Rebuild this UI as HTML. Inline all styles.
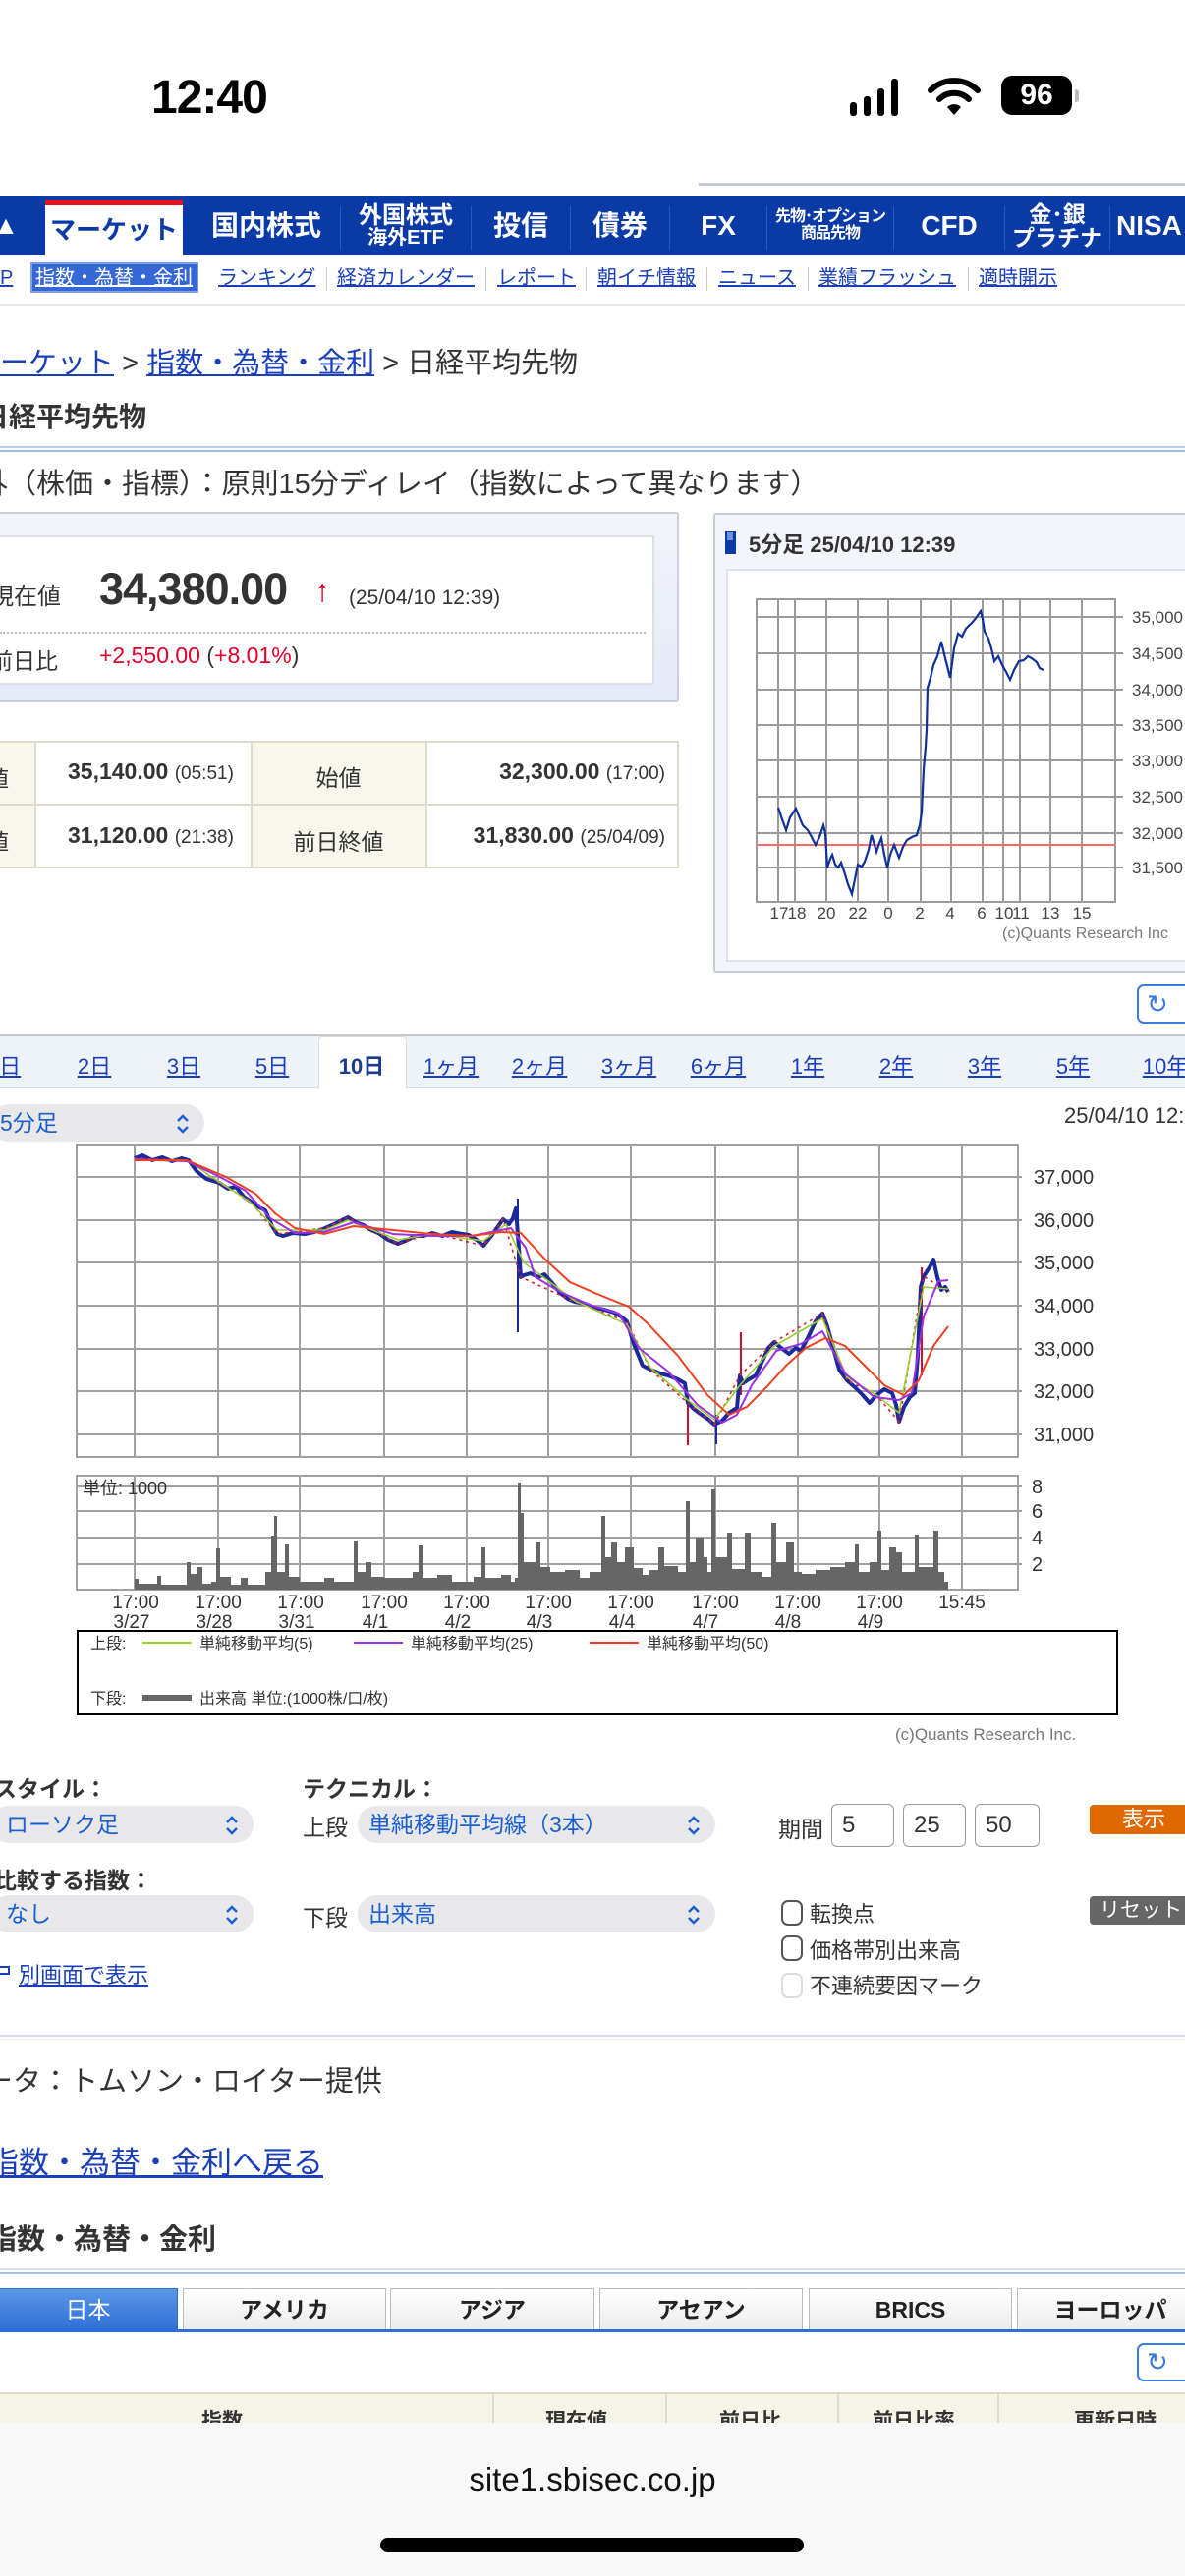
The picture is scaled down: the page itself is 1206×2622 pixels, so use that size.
<!DOCTYPE html>
<html><head><meta charset="utf-8">
<style>
*{margin:0;padding:0;box-sizing:border-box}
body{width:1206px;height:2622px;position:relative;overflow:hidden;background:#fff;font-family:"Liberation Sans","Noto Sans CJK JP",sans-serif;color:#333}
.a{position:absolute;white-space:nowrap}
.nav{position:absolute;left:0;top:200px;width:1206px;height:60px;background:#0a3aa6}
.nt{position:absolute;top:0;height:60px;color:#fff;font-weight:bold;text-align:center;display:flex;align-items:center;justify-content:center;line-height:1.05;white-space:nowrap}
.sep{position:absolute;top:10px;width:1px;height:44px;background:#2a58bd}
.sub{position:absolute;top:270px;font-size:20px;color:#1a3fb8;text-decoration:underline;line-height:26px;white-space:nowrap}
.ssep{position:absolute;top:272px;width:1px;height:24px;background:#ccc}
.pt{position:absolute;top:1068px;font-size:22px;color:#1a3fb8;text-decoration:underline;transform:translateX(-50%);white-space:nowrap}
.sel{position:absolute;height:38px;border-radius:19px;background:#e8e8ea;color:#1a5fd0;font-size:23px;line-height:38px;padding-left:8px;white-space:nowrap}
.sel svg{position:absolute;right:14px;top:9px}
.inp{position:absolute;top:1836px;height:44px;border:1.5px solid #999;border-radius:6px;font-size:24px;line-height:42px;padding-left:10px;background:#fff}
.cb{position:absolute;width:22px;height:26px;border:2px solid #555;border-radius:7px;background:#fff}
.tab{position:absolute;top:2329px;height:42px;border:1px solid #bbb;border-bottom:none;background:linear-gradient(#fff,#ececec);font-weight:bold;font-size:23px;text-align:center;line-height:42px;color:#222;white-space:nowrap}
</style></head><body>

<!-- status bar -->
<div class="a" style="left:154px;top:72px;font-size:48px;font-weight:bold;color:#000;letter-spacing:-1px">12:40</div>
<svg class="a" style="left:862px;top:76px" width="64" height="44">
<rect x="3" y="28" width="7" height="14" rx="3" fill="#000"/><rect x="17" y="22" width="7" height="20" rx="3" fill="#000"/><rect x="31" y="14" width="7" height="28" rx="3" fill="#000"/><rect x="45" y="4" width="7" height="38" rx="3" fill="#000"/></svg>
<svg class="a" style="left:944px;top:78px" width="54" height="40" viewBox="0 0 54 40">
<path d="M3 14 A34 34 0 0 1 51 14" fill="none" stroke="#000" stroke-width="6" stroke-linecap="round"/>
<path d="M12 23 A21 21 0 0 1 42 23" fill="none" stroke="#000" stroke-width="6" stroke-linecap="round"/>
<path d="M20 31 L27 39 L34 31 A10 10 0 0 0 20 31Z" fill="#000"/></svg>
<div class="a" style="left:1019px;top:77px;width:72px;height:40px;background:#000;border-radius:11px;color:#fff;font-weight:bold;font-size:30px;text-align:center;line-height:40px">96</div>
<div class="a" style="left:1094px;top:91px;width:4px;height:13px;background:#bbb;border-radius:0 3px 3px 0"></div>
<div class="a" style="left:711px;top:186px;width:495px;height:3px;background:#c5cbd6"></div>

<!-- nav -->
<div class="nav">
 <div class="nt" style="left:0;width:12px;font-size:26px">&#9650;</div>
 <div class="nt" style="left:46px;width:140px;top:4px;height:56px;background:#fff;color:#0a3aa6;font-size:26px;border-top:5px solid #e8101e">マーケット</div>
 <div class="nt" style="left:196px;width:150px;font-size:28px">国内株式</div>
 <div class="sep" style="left:346px"></div>
 <div class="nt" style="left:347px;width:132px;font-size:24px;flex-direction:column">外国株式<span style="font-size:20px">海外ETF</span></div>
 <div class="sep" style="left:479px"></div>
 <div class="nt" style="left:480px;width:100px;font-size:28px">投信</div>
 <div class="sep" style="left:580px"></div>
 <div class="nt" style="left:581px;width:100px;font-size:28px">債券</div>
 <div class="sep" style="left:681px"></div>
 <div class="nt" style="left:682px;width:98px;font-size:28px">FX</div>
 <div class="sep" style="left:780px"></div>
 <div class="nt" style="left:781px;width:128px;font-size:16px;flex-direction:column;letter-spacing:-1px"><span>先物･オプション</span><span>商品先物</span></div>
 <div class="sep" style="left:909px"></div>
 <div class="nt" style="left:910px;width:112px;font-size:28px">CFD</div>
 <div class="sep" style="left:1022px"></div>
 <div class="nt" style="left:1023px;width:106px;font-size:23px;flex-direction:column">金･銀<span>プラチナ</span></div>
 <div class="sep" style="left:1129px"></div>
 <div class="nt" style="left:1136px;width:90px;font-size:28px;justify-content:flex-start">NISA</div>
</div>

<!-- sub nav -->
<div class="sub" style="left:0">P</div>
<div class="a" style="left:31px;top:267px;width:171px;height:31px;background:#3568d4;border:2px solid #7ea0e6"></div>
<div class="sub" style="left:36px;color:#fff">指数・為替・金利</div>
<div class="sub" style="left:222px">ランキング</div><div class="ssep" style="left:332px"></div>
<div class="sub" style="left:343px">経済カレンダー</div><div class="ssep" style="left:494px"></div>
<div class="sub" style="left:506px">レポート</div><div class="ssep" style="left:596px"></div>
<div class="sub" style="left:608px">朝イチ情報</div><div class="ssep" style="left:719px"></div>
<div class="sub" style="left:731px">ニュース</div><div class="ssep" style="left:822px"></div>
<div class="sub" style="left:833px">業績フラッシュ</div><div class="ssep" style="left:985px"></div>
<div class="sub" style="left:996px">適時開示</div>
<div class="a" style="left:0;top:309px;width:1206px;height:2px;background:#e6e6e6"></div>

<!-- breadcrumb -->
<div class="a" style="left:-29px;top:346px;font-size:29px;color:#333"><span style="color:#1a3fb8;text-decoration:underline">マーケット</span> &gt; <span style="color:#1a3fb8;text-decoration:underline">指数・為替・金利</span> &gt; 日経平均先物</div>
<div class="a" style="left:-19px;top:403px;font-size:28px;font-weight:bold;color:#333">日経平均先物</div>
<div class="a" style="left:0;top:454px;width:1206px;height:2px;background:#bcd0ea"></div>
<div class="a" style="left:0;top:458px;width:1206px;height:2px;background:#9fbbe2"></div>
<div class="a" style="left:-21px;top:469px;font-size:29px;color:#333">外（株価・指標）：原則15分ディレイ（指数によって異なります）</div>

<!-- price box -->
<div class="a" style="left:-4px;top:521px;width:695px;height:194px;background:linear-gradient(#f3f5fb,#e3e9f6);border:2px solid #ccd;border-radius:3px"></div>
<div class="a" style="left:-4px;top:545px;width:670px;height:152px;background:#fff;border:2px solid #dcdfe6"></div>
<div class="a" style="left:-10px;top:587px;font-size:24px;color:#333">現在値</div>
<div class="a" style="left:101px;top:574px;font-size:45px;font-weight:bold;color:#333;letter-spacing:-1px">34,380.00</div>
<div class="a" style="left:320px;top:583px;font-size:32px;color:#e0002a">↑</div>
<div class="a" style="left:355px;top:597px;font-size:21px;color:#333">(25/04/10 12:39)</div>
<div class="a" style="left:0;top:643px;width:657px;border-top:2px dotted #bbb"></div>
<div class="a" style="left:-10px;top:654px;font-size:23px;color:#333">前日比</div>
<div class="a" style="left:101px;top:654px;font-size:23px;color:#e0002a">+2,550.00 <span style="color:#333">(</span>+8.01%<span style="color:#333">)</span></div>

<!-- table -->
<div class="a" style="left:-2px;top:754px;width:693px;height:130px;border:2px solid #dedbcc;background:#fff"></div>
<div class="a" style="left:0;top:756px;width:35px;height:126px;background:#f8f7ee"></div>
<div class="a" style="left:256px;top:756px;width:177px;height:126px;background:#f8f7ee"></div>
<div class="a" style="left:35px;top:754px;width:2px;height:130px;background:#dedbcc"></div>
<div class="a" style="left:255px;top:754px;width:2px;height:130px;background:#dedbcc"></div>
<div class="a" style="left:433px;top:754px;width:2px;height:130px;background:#dedbcc"></div>
<div class="a" style="left:0;top:818px;width:691px;height:2px;background:#dedbcc"></div>
<div class="a" style="left:-14px;top:774px;font-size:23px">値</div>
<div class="a" style="left:-14px;top:838px;font-size:23px">値</div>
<div class="a" style="left:69px;top:772px;font-size:23px;font-weight:bold">35,140.00 <span style="font-weight:normal;font-size:19px">(05:51)</span></div>
<div class="a" style="left:69px;top:837px;font-size:23px;font-weight:bold">31,120.00 <span style="font-weight:normal;font-size:19px">(21:38)</span></div>
<div class="a" style="left:256px;width:177px;top:773px;font-size:23px;text-align:center">始値</div>
<div class="a" style="left:256px;width:177px;top:838px;font-size:23px;text-align:center">前日終値</div>
<div class="a" style="right:529px;top:772px;font-size:23px;font-weight:bold">32,300.00 <span style="font-weight:normal;font-size:19px">(17:00)</span></div>
<div class="a" style="right:529px;top:837px;font-size:23px;font-weight:bold">31,830.00 <span style="font-weight:normal;font-size:19px">(25/04/09)</span></div>

<!-- mini chart panel -->
<div class="a" style="left:726px;top:522px;width:490px;height:468px;background:#f3f5fb;border:2px solid #c8ccd4;border-radius:3px"></div>
<div class="a" style="left:738px;top:540px;width:11px;height:24px;background:#0a3aa6"></div>
<div class="a" style="left:740px;top:541px;width:6px;height:9px;background:#6f8fd8"></div>
<div class="a" style="left:762px;top:537px;font-size:22px;font-weight:bold;color:#333">5分足 25/04/10 12:39</div>
<div class="a" style="left:739px;top:579px;width:480px;height:400px;background:#fff;border:2px solid #dde3ee"></div>
<svg class="a" style="left:0;top:0" width="1206" height="1000">
<g stroke="#9a9a9a" stroke-width="2" fill="none">
<rect x="770" y="610" width="365" height="308"/>
<path d="M770 628H1143M770 665H1143M770 702H1143M770 738H1143M770 774H1143M770 811H1143M770 848H1143M770 883H1143"/>
<path d="M792 610V918M809 610V918M841 610V918M873 610V918M904 610V918M937 610V918M968 610V918M1000 610V918M1021 610V918M1038 610V918M1069 610V918M1101 610V918"/>
</g>
<line x1="770" y1="860" x2="1135" y2="860" stroke="#ff6b6b" stroke-width="2"/>
<polyline fill="none" stroke="#0f2f9a" stroke-width="2.2" points="792,822 796,834 800,845 804,832 810,823 814,833 817,840 822,845 826,852 830,860 834,852 838,840 840,848 842,883 845,874 847,870 850,880 853,883 856,878 860,890 863,900 867,910 870,895 873,880 877,882 880,877 884,865 887,850 890,860 892,867 895,858 897,853 900,870 903,883 906,870 910,860 913,868 915,873 919,862 923,855 928,852 933,850 936,840 938,827 940,783 942,760 943,743 944,700 947,690 950,677 954,668 958,653 962,670 967,690 971,660 975,645 979,648 983,640 987,636 990,633 994,628 998,622 1000,630 1002,643 1006,650 1009,660 1012,673 1016,668 1020,677 1024,684 1028,692 1032,682 1037,673 1042,672 1046,668 1050,670 1055,674 1058,680 1062,682"/>
<g font-size="17" fill="#444" font-family="Liberation Sans,sans-serif">
<text x="1152" y="634">35,000</text><text x="1152" y="671">34,500</text><text x="1152" y="708">34,000</text><text x="1152" y="744">33,500</text><text x="1152" y="780">33,000</text><text x="1152" y="817">32,500</text><text x="1152" y="854">32,000</text><text x="1152" y="889">31,500</text>
<text y="935" text-anchor="middle"><tspan x="793">17</tspan><tspan x="811">18</tspan><tspan x="841">20</tspan><tspan x="873">22</tspan><tspan x="904">0</tspan><tspan x="936">2</tspan><tspan x="967">4</tspan><tspan x="999">6</tspan><tspan x="1022">10</tspan><tspan x="1039">11</tspan><tspan x="1069">13</tspan><tspan x="1101">15</tspan></text>
<text x="1020" y="955" fill="#777" font-size="16">(c)Quants Research Inc</text>
</g>
</svg>
<div class="a" style="left:1157px;top:1002px;width:60px;height:40px;border:2px solid #3b7be0;border-radius:7px;background:#fff;color:#3b7be0;font-size:26px;line-height:36px;padding-left:8px">↻</div>

<!-- period tabs -->
<div class="a" style="left:0;top:1052px;width:1206px;height:55px;background:#eef2f9;border-top:2px solid #c9c9c9;border-bottom:1px solid #dde"></div>
<div class="a" style="left:324px;top:1055px;width:90px;height:53px;background:#fff;border:1px solid #ddd;border-bottom:none;border-radius:4px 4px 0 0"></div>
<div class="pt" style="left:4px">1日</div><div class="pt" style="left:96px">2日</div><div class="pt" style="left:187px">3日</div><div class="pt" style="left:277px">5日</div>
<div class="pt" style="left:368px;color:#1a3a90;text-decoration:none;font-weight:bold">10日</div>
<div class="pt" style="left:459px">1ヶ月</div><div class="pt" style="left:549px">2ヶ月</div><div class="pt" style="left:640px">3ヶ月</div><div class="pt" style="left:731px">6ヶ月</div>
<div class="pt" style="left:822px">1年</div><div class="pt" style="left:912px">2年</div><div class="pt" style="left:1002px">3年</div><div class="pt" style="left:1092px">5年</div><div class="pt" style="left:1186px">10年</div>

<div class="sel" style="left:-10px;top:1124px;width:218px;padding-left:10px">5分足<svg width="16" height="22" viewBox="0 0 16 22"><path d="M3 8L8 3L13 8M3 14L8 19L13 14" stroke="#1a5fd0" stroke-width="2.5" fill="none"/></svg></div>
<div class="a" style="left:1083px;top:1123px;font-size:22px;color:#333">25/04/10 12:39</div>

<!-- main chart -->
<svg class="a" style="left:0;top:1150px" width="1206" height="630" viewBox="0 1150 1206 630">
<g stroke="#a0a0a0" stroke-width="2" fill="none">
<rect x="78" y="1165" width="958" height="318"/>
<path d="M78 1198H1040M78 1242H1040M78 1285H1040M78 1329H1040M78 1373H1040M78 1416H1040M78 1460H1040"/>
<path d="M137 1165V1483M222 1165V1483M305 1165V1483M391 1165V1483M475 1165V1483M558 1165V1483M642 1165V1483M728 1165V1483M812 1165V1483M895 1165V1483M979 1165V1483"/>
<rect x="78" y="1502" width="958" height="116"/>
<path d="M78 1513H1040M78 1538H1040M78 1565H1040M78 1592H1040"/>
<path d="M137 1502V1618M222 1502V1618M305 1502V1618M391 1502V1618M475 1502V1618M558 1502V1618M642 1502V1618M728 1502V1618M812 1502V1618M895 1502V1618M979 1502V1618"/>
</g>
<g stroke-width="2">
<line x1="527" y1="1220" x2="527" y2="1356" stroke="#1a2a9a"/>
<line x1="700" y1="1420" x2="700" y2="1471" stroke="#d01030"/>
<line x1="729" y1="1440" x2="729" y2="1470" stroke="#1a2a9a"/>
<line x1="754" y1="1356" x2="754" y2="1420" stroke="#d01030"/>
<line x1="938" y1="1290" x2="938" y2="1400" stroke="#d01030"/>
</g>
<polyline fill="none" stroke="#1a2a9a" stroke-width="4" stroke-linejoin="round" points="137,1179 145,1176 155,1181 165,1178 175,1182 185,1179 192,1181 200,1192 210,1200 223,1204 232,1210 240,1208 248,1218 254,1222 262,1228 270,1232 277,1248 282,1256 288,1258 298,1255 310,1256 320,1254 331,1250 340,1246 348,1242 354,1239 362,1244 370,1247 378,1252 385,1255 395,1262 405,1266 415,1262 422,1258 431,1258 440,1255 450,1258 460,1254 470,1256 477,1257 485,1262 492,1268 500,1258 507,1248 512,1241 518,1246 522,1240 525,1230 528,1270 530,1300 533,1298 540,1296 548,1300 554,1297 562,1306 570,1316 578,1322 585,1325 595,1327 605,1331 615,1333 625,1336 632,1340 638,1345 645,1368 654,1390 662,1394 672,1398 680,1400 690,1404 697,1408 700,1428 706,1434 714,1440 720,1444 727,1450 735,1446 742,1438 750,1433 753,1400 756,1408 762,1404 769,1400 776,1385 782,1372 788,1366 795,1372 803,1378 810,1372 815,1375 822,1362 830,1345 837,1337 842,1350 848,1372 854,1394 862,1405 870,1412 878,1420 885,1428 892,1420 900,1414 908,1418 912,1430 915,1447 920,1432 926,1422 931,1418 934,1380 937,1310 940,1299 946,1290 950,1282 954,1300 958,1313 962,1310 965,1315"/>
<polyline fill="none" stroke="#d8203a" stroke-width="1.6" stroke-dasharray="3 4" points="137,1179 192,1181 223,1204 254,1222 282,1256 331,1250 354,1239 405,1266 440,1255 492,1268 512,1241 530,1300 585,1325 638,1345 662,1394 700,1428 727,1450 753,1400 788,1366 837,1337 862,1405 892,1420 915,1447 940,1299 965,1315"/>
<polyline fill="none" stroke="#9acd32" stroke-width="1.6" points="137,1181 192,1182 223,1203 254,1223 282,1252 331,1252 354,1242 405,1262 440,1256 492,1263 515,1246 533,1285 585,1324 638,1348 662,1392 700,1425 727,1445 753,1410 788,1370 837,1342 862,1402 892,1420 915,1438 940,1310 965,1312"/>
<polyline fill="none" stroke="#9a30e8" stroke-width="2" points="137,1180 190,1182 220,1196 250,1212 275,1240 300,1255 330,1254 360,1244 400,1256 440,1258 480,1258 520,1250 535,1270 545,1300 570,1315 600,1328 630,1337 650,1372 680,1396 710,1430 735,1448 750,1440 765,1410 790,1375 815,1368 837,1355 860,1398 890,1422 915,1425 928,1418 940,1340 955,1304 965,1303"/>
<polyline fill="none" stroke="#f04020" stroke-width="2" points="137,1181 190,1181 230,1198 260,1215 280,1235 300,1250 330,1256 360,1248 400,1252 440,1256 480,1258 510,1254 530,1255 555,1282 580,1305 610,1318 640,1330 660,1348 690,1380 720,1420 742,1440 760,1432 780,1412 800,1390 820,1372 840,1362 860,1370 880,1390 900,1410 920,1420 935,1405 950,1370 965,1350"/>
<path fill="#666" d="M137 1618V1607H141V1612H160V1604H164V1613H190V1590H194V1602H200V1595H206V1612H215V1610H220V1576H224V1605H235V1613H245V1606H252V1613H270V1600H276V1563H279V1543H282V1600H290V1572H294V1605H305V1610H330V1606H340V1610H360V1569H364V1600H372V1590H378V1605H391V1606H420V1600H426V1573H430V1606H445V1603H460V1610H470V1610H482V1605H490V1575H494V1606H510V1603H520V1610H524V1606H527V1509H530V1540H533V1590H545V1570H550V1595H560V1600H575V1598H590V1606H600V1600H612V1543H616V1585H622V1570H628V1590H636V1575H645V1596H654V1603H660V1598H670V1575H676V1594H690V1600H698V1528H702V1590H708V1565H716V1585H720V1600H724V1516H728V1585H740V1560H745V1597H758V1560H764V1600H775V1605H785V1550H790V1590H800V1570H808V1600H816V1602H830V1598H845V1595H860V1590H870V1572H874V1600H885V1590H893V1558H897V1598H905V1575H912V1580H918V1600H931V1562H935V1595H950V1558H955V1600H961V1610H965V1618Z"/>
<g font-family="Liberation Sans,sans-serif" fill="#333">
<g font-size="20"><text x="1052" y="1205">37,000</text><text x="1052" y="1249">36,000</text><text x="1052" y="1292">35,000</text><text x="1052" y="1336">34,000</text><text x="1052" y="1380">33,000</text><text x="1052" y="1423">32,000</text><text x="1052" y="1467">31,000</text>
<text x="1050" y="1520">8</text><text x="1050" y="1545">6</text><text x="1050" y="1572">4</text><text x="1050" y="1599">2</text></g>
<text x="84" y="1521" font-size="18">単位: 1000</text>
<g font-size="19" text-anchor="middle">
<text x="138" y="1637">17:00</text><text x="222" y="1637">17:00</text><text x="306" y="1637">17:00</text><text x="391" y="1637">17:00</text><text x="475" y="1637">17:00</text><text x="558" y="1637">17:00</text><text x="642" y="1637">17:00</text><text x="728" y="1637">17:00</text><text x="812" y="1637">17:00</text><text x="895" y="1637">17:00</text><text x="979" y="1637">15:45</text>
<text x="134" y="1657">3/27</text><text x="218" y="1657">3/28</text><text x="302" y="1657">3/31</text><text x="382" y="1657">4/1</text><text x="466" y="1657">4/2</text><text x="549" y="1657">4/3</text><text x="633" y="1657">4/4</text><text x="718" y="1657">4/7</text><text x="802" y="1657">4/8</text><text x="886" y="1657">4/9</text></g>
</g>
<rect x="79" y="1660" width="1058" height="85" fill="none" stroke="#000" stroke-width="2"/>
<g font-family="Liberation Sans,Noto Sans CJK JP,sans-serif" font-size="16" fill="#333">
<text x="92" y="1678">上段:</text><line x1="145" y1="1672" x2="195" y2="1672" stroke="#9acd32" stroke-width="2"/><text x="203" y="1678">単純移動平均(5)</text>
<line x1="360" y1="1672" x2="410" y2="1672" stroke="#9a30e8" stroke-width="2"/><text x="418" y="1678">単純移動平均(25)</text>
<line x1="600" y1="1672" x2="650" y2="1672" stroke="#f04020" stroke-width="2"/><text x="658" y="1678">単純移動平均(50)</text>
<text x="92" y="1734">下段:</text><line x1="145" y1="1728" x2="195" y2="1728" stroke="#666" stroke-width="6"/><text x="203" y="1734">出来高 単位:(1000株/口/枚)</text>
<text x="911" y="1771" fill="#777" font-size="17">(c)Quants Research Inc.</text>
</g>
</svg>

<!-- controls -->
<div class="a" style="left:-6px;top:1802px;font-size:23px;font-weight:bold">スタイル：</div>
<div class="a" style="left:308px;top:1802px;font-size:23px;font-weight:bold">テクニカル：</div>
<div class="sel" style="left:-10px;top:1838px;width:268px;padding-left:16px">ローソク足<svg width="16" height="22" viewBox="0 0 16 22"><path d="M3 8L8 3L13 8M3 14L8 19L13 14" stroke="#1a5fd0" stroke-width="2.5" fill="none"/></svg></div>
<div class="a" style="left:308px;top:1841px;font-size:23px">上段</div>
<div class="sel" style="left:364px;top:1838px;width:364px;padding-left:11px">単純移動平均線（3本）<svg width="16" height="22" viewBox="0 0 16 22"><path d="M3 8L8 3L13 8M3 14L8 19L13 14" stroke="#1a5fd0" stroke-width="2.5" fill="none"/></svg></div>
<div class="a" style="left:792px;top:1843px;font-size:23px">期間</div>
<div class="inp" style="left:846px;width:64px">5</div>
<div class="inp" style="left:919px;width:64px">25</div>
<div class="inp" style="left:992px;width:66px">50</div>
<div class="a" style="left:1109px;top:1837px;width:110px;height:30px;background:#e06800;border-radius:4px;color:#fff;font-size:22px;line-height:30px;padding-left:33px">表示</div>
<div class="a" style="left:-6px;top:1895px;font-size:23px;font-weight:bold">比較する指数：</div>
<div class="sel" style="left:-10px;top:1929px;width:268px;padding-left:16px">なし<svg width="16" height="22" viewBox="0 0 16 22"><path d="M3 8L8 3L13 8M3 14L8 19L13 14" stroke="#1a5fd0" stroke-width="2.5" fill="none"/></svg></div>
<div class="a" style="left:308px;top:1933px;font-size:23px">下段</div>
<div class="sel" style="left:364px;top:1929px;width:364px;padding-left:11px">出来高<svg width="16" height="22" viewBox="0 0 16 22"><path d="M3 8L8 3L13 8M3 14L8 19L13 14" stroke="#1a5fd0" stroke-width="2.5" fill="none"/></svg></div>
<div class="cb" style="left:795px;top:1934px"></div><div class="a" style="left:824px;top:1931px;font-size:22px">転換点</div>
<div class="cb" style="left:795px;top:1970px"></div><div class="a" style="left:824px;top:1968px;font-size:22px">価格帯別出来高</div>
<div class="cb" style="left:795px;top:2008px;border-color:#ddd"></div><div class="a" style="left:824px;top:2004px;font-size:22px">不連続要因マーク</div>
<div class="a" style="left:1109px;top:1930px;width:110px;height:29px;background:#666;border-radius:4px;color:#fff;font-size:21px;line-height:29px;padding-left:10px">リセット</div>
<div class="a" style="left:-2px;top:2001px;width:12px;height:9px;border:2px solid #1a3fb8"></div>
<div class="a" style="left:19px;top:1993px;font-size:22px;color:#1a3fb8;text-decoration:underline">別画面で表示</div>
<div class="a" style="left:0;top:2071px;width:1206px;height:2px;background:#d7dde8"></div>
<div class="a" style="left:0;top:2075px;width:1206px;height:1px;background:#e8ebf0"></div>
<div class="a" style="left:-16px;top:2095px;font-size:29px">ータ：トムソン・ロイター提供</div>
<div class="a" style="left:-12px;top:2176px;font-size:31px;color:#1a3fb8;text-decoration:underline">指数・為替・金利へ戻る</div>
<div class="a" style="left:-12px;top:2256px;font-size:29px;font-weight:bold">指数・為替・金利</div>
<div class="a" style="left:0;top:2309px;width:1206px;height:2px;background:#d7e2f2"></div>
<div class="a" style="left:0;top:2313px;width:1206px;height:2px;background:#a9c2e6"></div>

<!-- region tabs -->
<div class="tab" style="left:-2px;width:183px;background:linear-gradient(#5a97e6,#2e6fd6);color:#fff;border-color:#2e6fd6;font-weight:normal">日本</div>
<div class="tab" style="left:186px;width:207px">アメリカ</div>
<div class="tab" style="left:397px;width:208px">アジア</div>
<div class="tab" style="left:610px;width:207px">アセアン</div>
<div class="tab" style="left:823px;width:207px">BRICS</div>
<div class="tab" style="left:1035px;width:190px">ヨーロッパ</div>
<div class="a" style="left:0;top:2371px;width:1206px;height:3px;background:#2e6fd6"></div>
<div class="a" style="left:1157px;top:2385px;width:60px;height:39px;border:2px solid #3b7be0;border-radius:7px;background:#fff;color:#3b7be0;font-size:26px;line-height:35px;padding-left:8px">↻</div>
<div class="a" style="left:0;top:2435px;width:1206px;height:40px;background:#f6f4e6;border-top:2px solid #dedbcc"></div>
<div class="a" style="left:501px;top:2435px;width:2px;height:40px;background:#dedbcc"></div>
<div class="a" style="left:677px;top:2435px;width:2px;height:40px;background:#dedbcc"></div>
<div class="a" style="left:852px;top:2435px;width:2px;height:40px;background:#dedbcc"></div>
<div class="a" style="left:1015px;top:2435px;width:2px;height:40px;background:#dedbcc"></div>
<div class="a" style="left:205px;top:2448px;font-size:21px;font-weight:bold">指数</div>
<div class="a" style="left:555px;top:2448px;font-size:21px;font-weight:bold">現在値</div>
<div class="a" style="left:732px;top:2448px;font-size:21px;font-weight:bold">前日比</div>
<div class="a" style="left:888px;top:2448px;font-size:21px;font-weight:bold">前日比率</div>
<div class="a" style="left:1093px;top:2448px;font-size:21px;font-weight:bold">更新日時</div>

<!-- safari bottom -->
<div class="a" style="left:0;top:2466px;width:1206px;height:156px;background:#f8f8f8"></div>
<div class="a" style="left:0;top:2505px;width:1206px;text-align:center;font-size:33px;color:#111">site1.sbisec.co.jp</div>
<div class="a" style="left:387px;top:2583px;width:431px;height:15px;background:#000;border-radius:8px"></div>
</body></html>
